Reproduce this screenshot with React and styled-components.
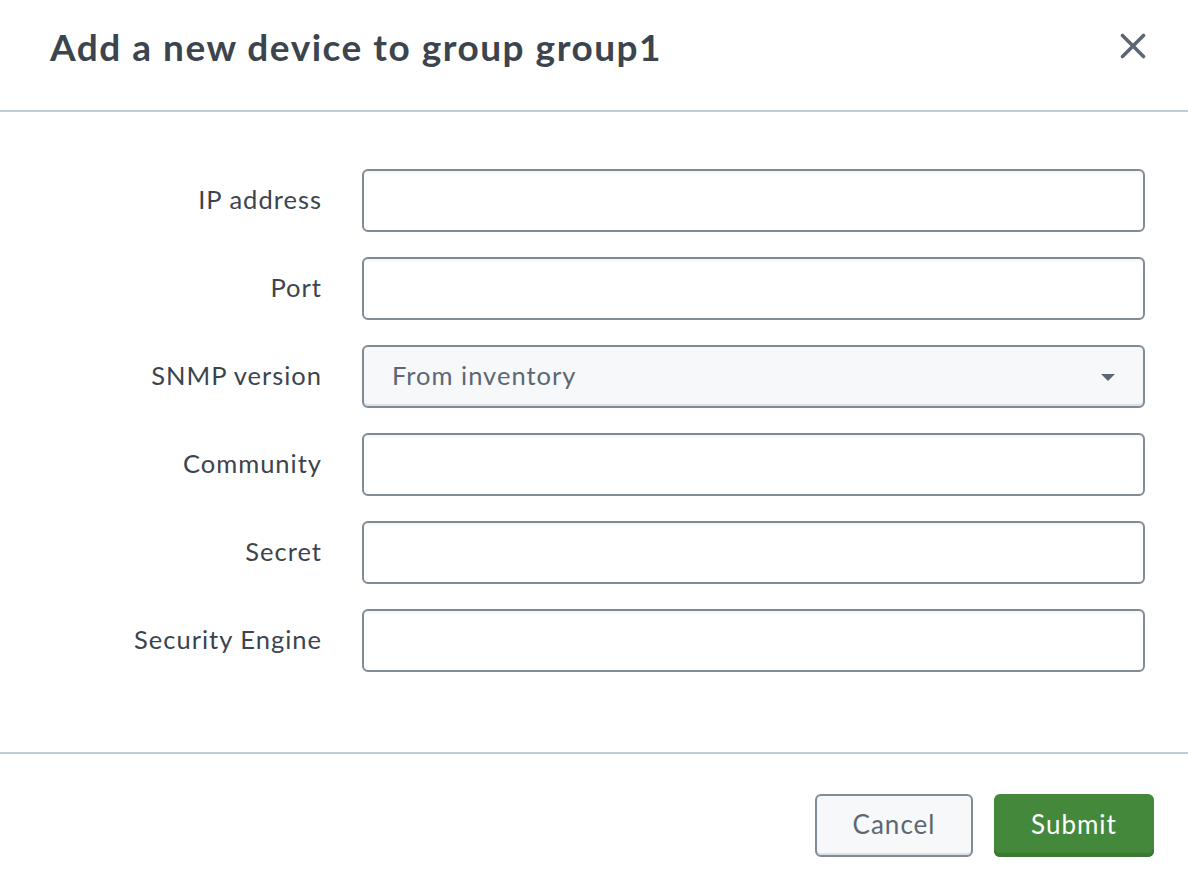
import React from "react";
import styled, { createGlobalStyle } from "styled-components";

const Global = createGlobalStyle`
  html, body { margin: 0; padding: 0; background: #ffffff; }
  body { font-family: Lato, "Open Sans", "Liberation Sans", sans-serif; -webkit-font-smoothing: antialiased; }
  * { box-sizing: border-box; }
`;

const Modal = styled.div`
  width: 1188px;
  height: 892px;
  display: flex;
  flex-direction: column;
  background: #fff;
`;

const Header = styled.header`
  height: 112px;
  display: flex;
  align-items: center;
  justify-content: space-between;
  padding: 0 42px 18px 50px;
  border-bottom: 2px solid #c3cbd4;
`;

const Title = styled.h1`
  margin: 0;
  font-size: 37px;
  font-weight: 700;
  color: #3c444d;
  letter-spacing: 1.5px;
`;

const CloseButton = styled.button`
  width: 26px;
  height: 26px;
  padding: 0;
  border: 0;
  background: none;
  display: flex;
  align-items: center;
  justify-content: center;
  cursor: pointer;
`;

const Body = styled.div`
  display: grid;
  grid-template-columns: 321px 1fr;
  column-gap: 41px;
  row-gap: 25px;
  padding: 57px 43px 80px 0;
  border-bottom: 2px solid #c3cbd4;
`;

const Label = styled.label`
  justify-self: end;
  align-self: center;
  font-size: 25.5px;
  letter-spacing: 1px;
  margin-right: -1px;
  padding-bottom: 4px;
  color: #3c444d;
`;

const TextInput = styled.input`
  height: 63px;
  width: 100%;
  border: 2px solid #818b96;
  border-radius: 6px;
  background: #fff;
  box-shadow: inset 0 2px 1px rgba(0, 0, 0, 0.04);
  font: inherit;
  font-size: 25px;
  padding: 0 28px;
  outline: none;
`;

const Select = styled.div`
  height: 63px;
  border: 2px solid #818b96;
  border-radius: 6px;
  background: #f7f8fa;
  box-shadow: inset 0 -2px 0 #dde1e6;
  display: flex;
  align-items: center;
  justify-content: space-between;
  padding: 0 28px 0 28px;
  font-size: 25.5px;
  letter-spacing: 1px;
  color: #5c6773;
`;

const SelectText = styled.span`
  padding-bottom: 4px;
`;

const Caret = styled.span`
  width: 0;
  height: 0;
  border-left: 7px solid transparent;
  border-right: 7px solid transparent;
  border-top: 7px solid #5c6773;
  margin-top: 1px;
`;

const Footer = styled.footer`
  flex: 1;
  display: flex;
  justify-content: flex-end;
  align-items: flex-start;
  gap: 21px;
  padding: 40px 34px 0 0;
`;

const Button = styled.button`
  height: 63px;
  width: ${(p) => (p.$primary ? "160px" : "158px")};
  border-radius: 6px;
  font-family: inherit;
  font-size: 26px;
  letter-spacing: 1px;
  cursor: pointer;
  border: ${(p) => (p.$primary ? "none" : "2px solid #818b96")};
  background: ${(p) => (p.$primary ? "#44883b" : "#f7f8fa")};
  color: ${(p) => (p.$primary ? "#ffffff" : "#5c6773")};
  box-shadow: ${(p) =>
    p.$primary ? "inset 0 -4px 0 #3a7a33" : "inset 0 -2px 0 #dde1e6"};
  padding: 0 0 4px;
`;

const fields = [
  "IP address",
  "Port",
  "SNMP version",
  "Community",
  "Secret",
  "Security Engine",
];

export default function App() {
  return (
    <>
      <Global />
      <Modal>
        <Header>
          <Title>Add a new device to group group1</Title>
          <CloseButton aria-label="Close">
            <svg width="26" height="26" viewBox="0 0 26 26">
              <path
                d="M2.5 2.5 L23.5 23.5 M23.5 2.5 L2.5 23.5"
                stroke="#5c6773"
                strokeWidth="3.6"
                strokeLinecap="round"
              />
            </svg>
          </CloseButton>
        </Header>
        <Body>
          {fields.map((f) => (
            <React.Fragment key={f}>
              <Label>{f}</Label>
              {f === "SNMP version" ? (
                <Select>
                  <SelectText>From inventory</SelectText>
                  <Caret />
                </Select>
              ) : (
                <TextInput aria-label={f} />
              )}
            </React.Fragment>
          ))}
        </Body>
        <Footer>
          <Button>Cancel</Button>
          <Button $primary>Submit</Button>
        </Footer>
      </Modal>
    </>
  );
}
